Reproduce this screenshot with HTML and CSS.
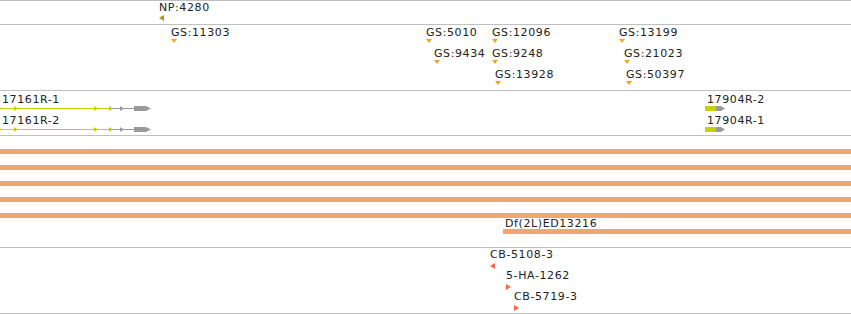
FILE: index.html
```html
<!DOCTYPE html>
<html>
<head>
<meta charset="utf-8">
<link rel="stylesheet" href="styles.css">
</head>
<body>
<div class="browser">
  <section class="track t-np">
    <div class="feat" style="left:159px;top:1px">
      <span class="lbl">NP:4280</span>
      <svg class="mk mk-side np" width="5" height="6" viewBox="0 0 5 6"><polygon points="5,0 0,3 5,6"/></svg>
    </div>
  </section>

  <section class="track t-gs">
    <div class="feat" style="left:171px;top:2px"><span class="lbl">GS:11303</span><svg class="mk gs" width="6" height="4" viewBox="0 0 6 4"><polygon points="0,0 6,0 3,4"/></svg></div>
    <div class="feat" style="left:426px;top:2px"><span class="lbl">GS:5010</span><svg class="mk gs" width="6" height="4" viewBox="0 0 6 4"><polygon points="0,0 6,0 3,4"/></svg></div>
    <div class="feat" style="left:492px;top:2px"><span class="lbl">GS:12096</span><svg class="mk gs" width="6" height="4" viewBox="0 0 6 4"><polygon points="0,0 6,0 3,4"/></svg></div>
    <div class="feat" style="left:619px;top:2px"><span class="lbl">GS:13199</span><svg class="mk gs" width="6" height="4" viewBox="0 0 6 4"><polygon points="0,0 6,0 3,4"/></svg></div>
    <div class="feat" style="left:434px;top:23px"><span class="lbl">GS:9434</span><svg class="mk gs" width="6" height="4" viewBox="0 0 6 4"><polygon points="0,0 6,0 3,4"/></svg></div>
    <div class="feat" style="left:492px;top:23px"><span class="lbl">GS:9248</span><svg class="mk gs" width="6" height="4" viewBox="0 0 6 4"><polygon points="0,0 6,0 3,4"/></svg></div>
    <div class="feat" style="left:624px;top:23px"><span class="lbl">GS:21023</span><svg class="mk gs" width="6" height="4" viewBox="0 0 6 4"><polygon points="0,0 6,0 3,4"/></svg></div>
    <div class="feat" style="left:495px;top:44px"><span class="lbl">GS:13928</span><svg class="mk gs" width="6" height="4" viewBox="0 0 6 4"><polygon points="0,0 6,0 3,4"/></svg></div>
    <div class="feat" style="left:626px;top:44px"><span class="lbl">GS:50397</span><svg class="mk gs" width="6" height="4" viewBox="0 0 6 4"><polygon points="0,0 6,0 3,4"/></svg></div>
  </section>

  <section class="track t-tx">
    <div class="feat" style="left:0;top:3px">
      <span class="lbl tx-lbl">17161R-1</span>
      <svg class="tx" width="152" height="5" viewBox="0 0 152 5">
        <rect class="utr-line" x="0" y="2" width="110" height="1"/>
        <polygon class="cds" points="-2,0 2,2.5 -2,5"/>
        <polygon class="cds" points="14,0 18,2.5 14,5"/>
        <polygon class="cds" points="94,0 98,2.5 94,5"/>
        <polygon class="cds" points="109,0 113,2.5 109,5"/>
        <rect class="nc" x="112" y="2" width="22" height="1"/>
        <polygon class="nc" points="120,0 124,2.5 120,5"/>
        <polygon class="nc" points="134,0 146,0 151,2.5 146,5 134,5"/>
      </svg>
    </div>
    <div class="feat" style="left:0;top:24px">
      <span class="lbl tx-lbl">17161R-2</span>
      <svg class="tx" width="152" height="5" viewBox="0 0 152 5">
        <rect class="utr-line" x="0" y="2" width="110" height="1"/>
        <polygon class="cds" points="-2,0 2,2.5 -2,5"/>
        <polygon class="cds" points="14,0 18,2.5 14,5"/>
        <polygon class="cds" points="94,0 98,2.5 94,5"/>
        <polygon class="cds" points="109,0 113,2.5 109,5"/>
        <rect class="nc" x="112" y="2" width="22" height="1"/>
        <polygon class="nc" points="120,0 124,2.5 120,5"/>
        <polygon class="nc" points="134,0 146,0 151,2.5 146,5 134,5"/>
      </svg>
    </div>
    <div class="feat" style="left:705px;top:3px">
      <span class="lbl tx-lbl">17904R-2</span>
      <svg class="tx" width="20" height="5" viewBox="0 0 20 5">
        <rect class="cds" x="0" y="0" width="11" height="5"/>
        <polygon class="nc" points="11,0 16,0 20,2.5 16,5 11,5"/>
      </svg>
    </div>
    <div class="feat" style="left:705px;top:24px">
      <span class="lbl tx-lbl">17904R-1</span>
      <svg class="tx" width="20" height="5" viewBox="0 0 20 5">
        <rect class="cds" x="0" y="0" width="11" height="5"/>
        <polygon class="nc" points="11,0 16,0 20,2.5 16,5 11,5"/>
      </svg>
    </div>
  </section>

  <section class="track t-df">
    <div class="bar"></div>
    <div class="bar"></div>
    <div class="bar"></div>
    <div class="bar"></div>
    <div class="bar"></div>
    <div class="df-feat" style="margin-left:503px">
      <span class="lbl df-lbl">Df(2L)ED13216</span>
      <div class="bar"></div>
    </div>
  </section>

  <section class="track t-cb">
    <div class="feat" style="left:490px;top:1px"><span class="lbl">CB-5108-3</span><svg class="mk mk-side2 cb" width="5" height="6" viewBox="0 0 5 6"><polygon points="5,0 0,3 5,6"/></svg></div>
    <div class="feat" style="left:506px;top:22px"><span class="lbl">5-HA-1262</span><svg class="mk mk-side2 cb" width="5" height="6" viewBox="0 0 5 6"><polygon points="0,0 5,3 0,6"/></svg></div>
    <div class="feat" style="left:514px;top:43px"><span class="lbl">CB-5719-3</span><svg class="mk mk-side2 cb" width="5" height="6" viewBox="0 0 5 6"><polygon points="0,0 5,3 0,6"/></svg></div>
  </section>
</div>
</body>
</html>
```

FILE: styles.css
```css
html, body {
  margin: 0;
  padding: 0;
  background: #ffffff;
}

.browser {
  width: 851px;
  height: 314px;
  overflow: hidden;
  font-family: "DejaVu Sans", "Liberation Sans", sans-serif;
  font-size: 11px;
  color: #222;
}

.track {
  position: relative;
  border-top: 1px solid #c0c0c0;
}

.t-np { height: 23px; }
.t-gs { height: 65px; }
.t-tx { height: 44px; }
.t-df {
  height: 98px;
  padding-top: 13px;
  display: flex;
  flex-direction: column;
}
.t-cb {
  height: 65px;
  border-bottom: 1px solid #c0c0c0;
}

.feat {
  position: absolute;
  display: flex;
  flex-direction: column;
  align-items: flex-start;
}

.lbl {
  display: block;
  line-height: 12px;
  white-space: nowrap;
  letter-spacing: 0.6px;
}

.mk { display: block; }
.mk-side { margin-top: 1px; }
.mk-side2 { margin-top: 2px; }

.np polygon { fill: #c2900f; }
.gs polygon { fill: #f2a423; }
.cb polygon { fill: #f4684a; }

.tx-lbl { padding-left: 2px; }
.tx { display: block; overflow: visible; }
.tx .cds, .tx .utr-line { fill: #c3d200; }
.tx .nc { fill: #9a9a9a; }

.bar {
  height: 5px;
  background: #f4a46e;
  flex: none;
}
.bar + .bar { margin-top: 11px; }

.df-lbl {
  line-height: 11px;
  padding-left: 2px;
}
```
